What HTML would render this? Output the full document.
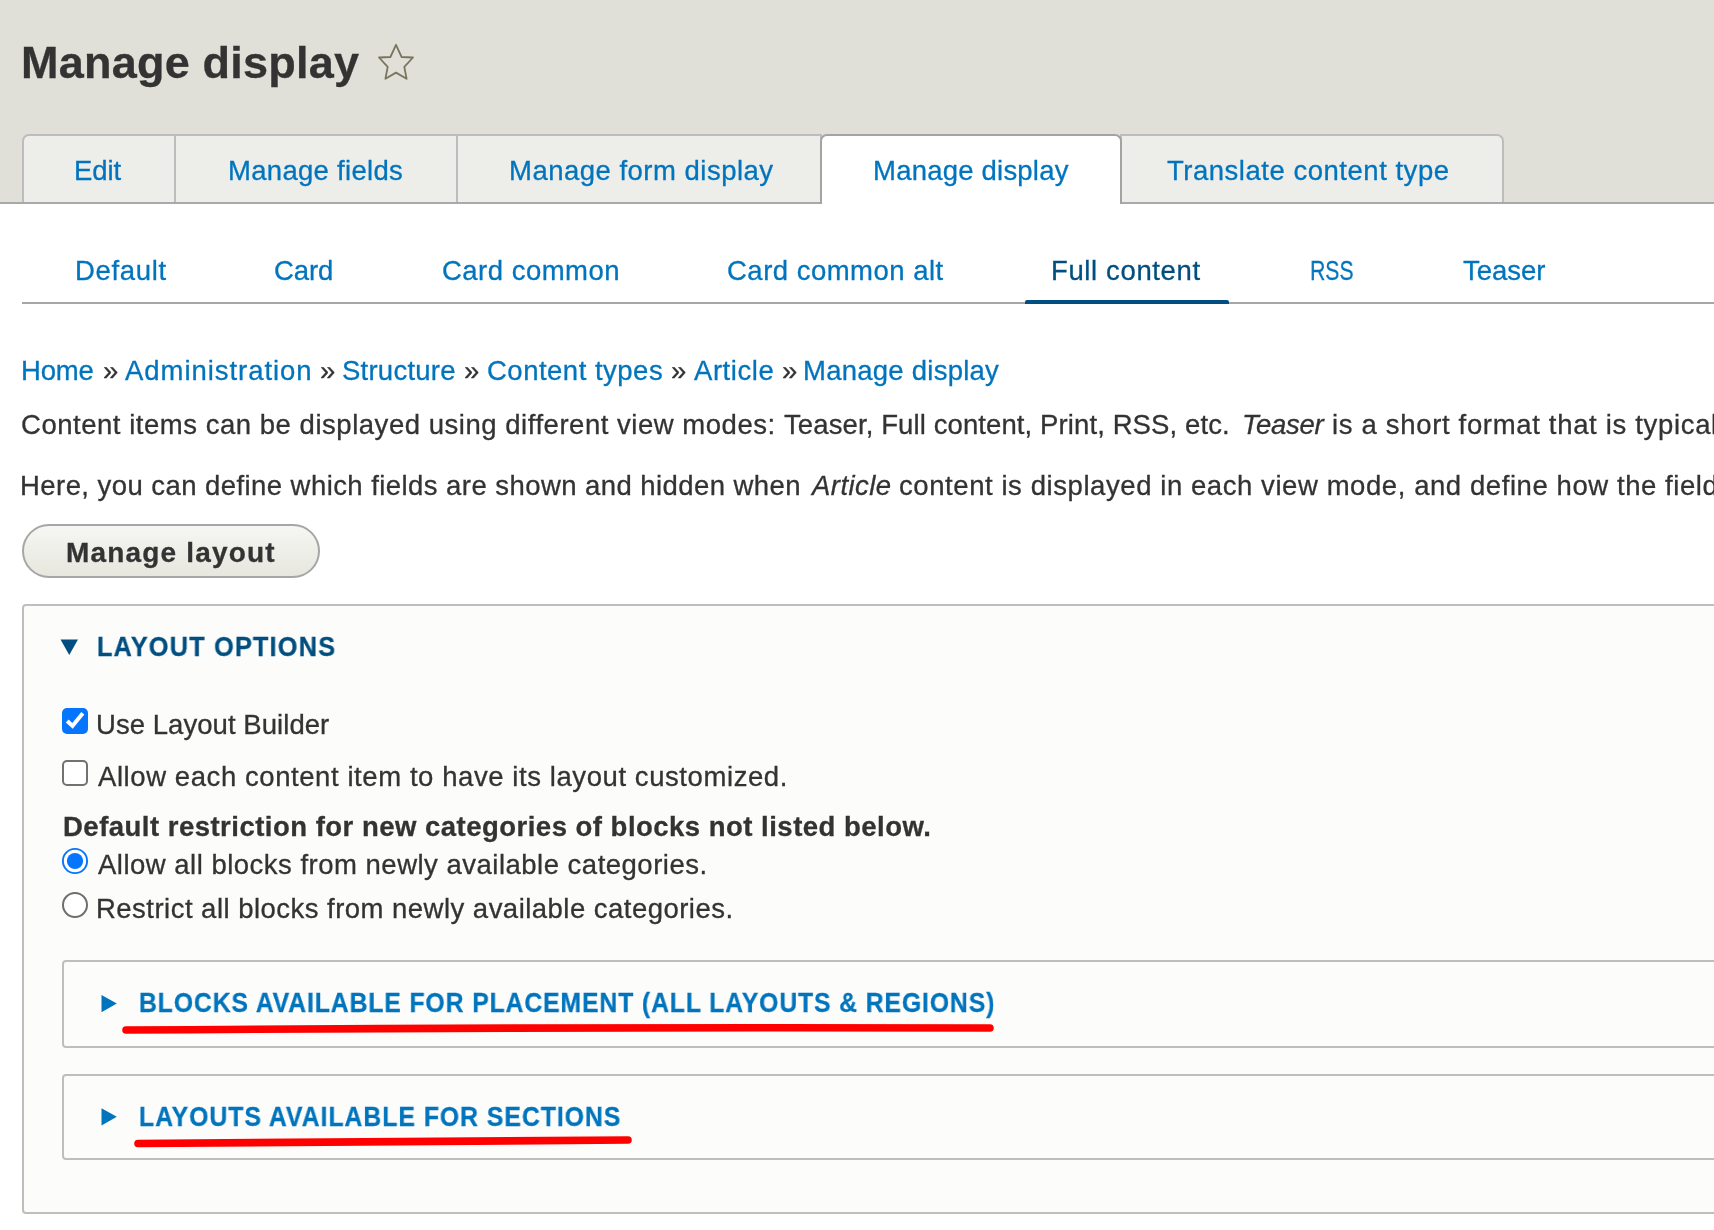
<!DOCTYPE html>
<html><head><meta charset="utf-8">
<style>
html,body{margin:0;padding:0;}
body{width:1714px;height:1230px;overflow:hidden;position:relative;background:#fff;font-family:"Liberation Sans",sans-serif;}
.t{position:absolute;white-space:nowrap;line-height:1.117;transform-origin:0 0;will-change:transform;-webkit-text-stroke:0.3px currentColor;}
.abs{position:absolute;box-sizing:border-box;}
#hdr{left:0;top:0;width:1714px;height:203px;background:#e0e0d8;}
.ptab{top:134px;height:70px;background:#ededea;border:2px solid #bcbcbc;border-bottom:none;}
#ptabline{left:0;top:202px;width:1714px;height:2px;background:#a9a9a9;}
#stabline{left:22px;top:302px;width:1700px;height:2px;background:#a6a6a6;}
#stabact{left:1025px;top:300px;width:204px;height:4px;background:#004f80;border-radius:2px 2px 0 0;}
#btn{left:22px;top:524px;width:298px;height:54px;border:2px solid #a6a6a6;border-radius:27px;background:linear-gradient(#f6f6f3,#e7e7df);}
#det{left:22px;top:604px;width:1760px;height:610px;border:2px solid #bebebe;border-radius:4px;background:#fcfcfa;}
.ndet{left:62px;width:1720px;border:2px solid #bebebe;border-radius:4px;background:#fcfcfa;}
.cb{width:26px;height:26px;border-radius:5px;}
</style></head><body>
<div id="hdr" class="abs"></div>
<svg class="abs" style="left:0;top:0" width="1714" height="1230" viewBox="0 0 1714 1230">
</svg>
<div class="abs ptab" style="left:22px;width:154px;border-top-left-radius:7px;"></div>
<div class="abs ptab" style="left:174px;width:284px;"></div>
<div class="abs ptab" style="left:456px;width:366px;"></div>
<div class="abs ptab" style="left:1120px;width:384px;border-top-right-radius:7px;"></div>
<div id="ptabline" class="abs"></div>
<div class="abs ptab" style="left:820px;width:302px;height:70px;background:#fff;border-color:#a3a3a3;border-radius:7px 7px 0 0;"></div>
<div id="stabline" class="abs"></div>
<div id="stabact" class="abs"></div>
<div id="btn" class="abs"></div>
<div id="det" class="abs"></div>
<div class="abs ndet" style="top:960px;height:88px;"></div>
<div class="abs ndet" style="top:1074px;height:86px;"></div>
<!-- star -->
<svg class="abs" style="left:370px;top:36px" width="52" height="52" viewBox="370 36 52 52">
<polygon points="396,44.8 401.6,57 413,57.5 404.3,66.8 406.6,78.8 396,72.6 385.4,78.8 387.7,66.8 379,57.5 390.4,57" fill="none" stroke="#79755f" stroke-width="1.8" stroke-linejoin="round"/>
</svg>
<!-- layout options triangle -->
<svg class="abs" style="left:0;top:0" width="1714" height="1230">
<polygon points="60.5,639.5 78,639.5 69.25,655" fill="#004f80"/>
<polygon points="101.5,995 116.8,1003.6 101.5,1012.2" fill="#0074bd"/>
<polygon points="101.5,1108.2 116.8,1116.8 101.5,1125.4" fill="#0074bd"/>
<path d="M126,1030 Q560,1027 990,1028" stroke="#ff0000" stroke-width="7.6" stroke-linecap="round" fill="none"/>
<path d="M138,1143.5 Q380,1141 628,1140" stroke="#ff0000" stroke-width="7.6" stroke-linecap="round" fill="none"/>
</svg>
<!-- checkboxes -->
<div class="abs cb" style="left:62px;top:708px;background:#0675fd;"></div>
<svg class="abs" style="left:62px;top:708px" width="26" height="26" viewBox="0 0 26 26"><path d="M5.2,13 L10.5,17.9 L20.8,5.3" stroke="#fff" stroke-width="4" fill="none" stroke-linecap="butt" stroke-linejoin="miter"/></svg>
<div class="abs cb" style="left:62px;top:760px;background:#fff;border:2px solid #727272;"></div>
<svg class="abs" style="left:60px;top:846px" width="30" height="74" viewBox="0 0 30 74">
<circle cx="15" cy="15" r="12.1" fill="#fff" stroke="#0675fd" stroke-width="1.9"/>
<circle cx="15" cy="15" r="8.1" fill="#0675fd"/>
<circle cx="15" cy="59" r="12" fill="#fff" stroke="#6e6e6e" stroke-width="2"/>
</svg>
<div class="t" style="left:21.40px;top:38.38px;font-size:45px;font-weight:bold;font-style:normal;color:#333333;letter-spacing:0.225px">Manage display</div>
<div class="t" style="left:74.40px;top:156.01px;font-size:27.5px;font-weight:normal;font-style:normal;color:#0074bd;letter-spacing:-0.049px">Edit</div>
<div class="t" style="left:228.00px;top:156.01px;font-size:27.5px;font-weight:normal;font-style:normal;color:#0074bd;letter-spacing:0.294px">Manage fields</div>
<div class="t" style="left:508.70px;top:156.01px;font-size:27.5px;font-weight:normal;font-style:normal;color:#0074bd;letter-spacing:0.488px">Manage form display</div>
<div class="t" style="left:872.70px;top:156.01px;font-size:27.5px;font-weight:normal;font-style:normal;color:#0074bd;letter-spacing:0.218px">Manage display</div>
<div class="t" style="left:1166.70px;top:156.01px;font-size:27.5px;font-weight:normal;font-style:normal;color:#0074bd;letter-spacing:0.520px">Translate content type</div>
<div class="t" style="left:74.50px;top:255.71px;font-size:27.5px;font-weight:normal;font-style:normal;color:#0074bd;letter-spacing:0.651px">Default</div>
<div class="t" style="left:274.00px;top:255.71px;font-size:27.5px;font-weight:normal;font-style:normal;color:#0074bd;letter-spacing:-0.104px">Card</div>
<div class="t" style="left:441.70px;top:255.71px;font-size:27.5px;font-weight:normal;font-style:normal;color:#0074bd;letter-spacing:0.480px">Card common</div>
<div class="t" style="left:727.00px;top:255.71px;font-size:27.5px;font-weight:normal;font-style:normal;color:#0074bd;letter-spacing:0.490px">Card common alt</div>
<div class="t" style="left:1051.20px;top:255.71px;font-size:27.5px;font-weight:normal;font-style:normal;color:#004f80;letter-spacing:0.626px">Full content</div>
<div class="t" style="left:1309.84px;top:255.71px;font-size:27.5px;font-weight:normal;font-style:normal;color:#0074bd;letter-spacing:0.000px;transform:scaleX(0.770)">RSS</div>
<div class="t" style="left:1462.70px;top:255.71px;font-size:27.5px;font-weight:normal;font-style:normal;color:#0074bd;letter-spacing:-0.017px">Teaser</div>
<div class="t" style="left:20.75px;top:355.81px;font-size:27.5px;font-weight:normal;font-style:normal;color:#0074bd;letter-spacing:-0.171px">Home</div>
<div class="t" style="left:102.60px;top:355.81px;font-size:27.5px;font-weight:normal;font-style:normal;color:#333333;letter-spacing:0.000px">»</div>
<div class="t" style="left:125.40px;top:355.81px;font-size:27.5px;font-weight:normal;font-style:normal;color:#0074bd;letter-spacing:0.950px">Administration</div>
<div class="t" style="left:319.90px;top:355.81px;font-size:27.5px;font-weight:normal;font-style:normal;color:#333333;letter-spacing:0.000px">»</div>
<div class="t" style="left:341.80px;top:355.81px;font-size:27.5px;font-weight:normal;font-style:normal;color:#0074bd;letter-spacing:0.240px">Structure</div>
<div class="t" style="left:464.30px;top:355.81px;font-size:27.5px;font-weight:normal;font-style:normal;color:#333333;letter-spacing:0.000px">»</div>
<div class="t" style="left:486.90px;top:355.81px;font-size:27.5px;font-weight:normal;font-style:normal;color:#0074bd;letter-spacing:0.497px">Content types</div>
<div class="t" style="left:670.60px;top:355.81px;font-size:27.5px;font-weight:normal;font-style:normal;color:#333333;letter-spacing:0.000px">»</div>
<div class="t" style="left:693.60px;top:355.81px;font-size:27.5px;font-weight:normal;font-style:normal;color:#0074bd;letter-spacing:0.548px">Article</div>
<div class="t" style="left:781.50px;top:355.81px;font-size:27.5px;font-weight:normal;font-style:normal;color:#333333;letter-spacing:0.000px">»</div>
<div class="t" style="left:803.10px;top:355.81px;font-size:27.5px;font-weight:normal;font-style:normal;color:#0074bd;letter-spacing:0.248px">Manage display</div>
<div class="t" style="left:21.00px;top:410.31px;font-size:27.5px;font-weight:normal;font-style:normal;color:#333333;letter-spacing:0.528px">Content items can be displayed using different view modes:</div>
<div class="t" style="left:784.00px;top:410.31px;font-size:27.5px;font-weight:normal;font-style:normal;color:#333333;letter-spacing:0.106px">Teaser, Full content, Print, RSS, etc.</div>
<div class="t" style="left:1241.60px;top:410.31px;font-size:27.5px;font-weight:normal;font-style:italic;color:#333333;letter-spacing:-0.301px">Teaser</div>
<div class="t" style="left:1331.90px;top:410.31px;font-size:27.5px;font-weight:normal;font-style:normal;color:#333333;letter-spacing:0.671px">is a short format that is typical</div>
<div class="t" style="left:20.00px;top:470.51px;font-size:27.5px;font-weight:normal;font-style:normal;color:#333333;letter-spacing:0.438px">Here, you can define which fields are shown and hidden when</div>
<div class="t" style="left:812.20px;top:470.51px;font-size:27.5px;font-weight:normal;font-style:italic;color:#333333;letter-spacing:0.448px">Article</div>
<div class="t" style="left:899.00px;top:470.51px;font-size:27.5px;font-weight:normal;font-style:normal;color:#333333;letter-spacing:0.573px">content is displayed in each view mode, and define how the field</div>
<div class="t" style="left:65.80px;top:536.76px;font-size:28px;font-weight:bold;font-style:normal;color:#333333;letter-spacing:1.170px">Manage layout</div>
<div class="t" style="left:97.28px;top:631.91px;font-size:27.5px;font-weight:bold;font-style:normal;color:#004f80;letter-spacing:1.293px;transform:scaleX(0.920)">LAYOUT OPTIONS</div>
<div class="t" style="left:95.60px;top:709.91px;font-size:27.5px;font-weight:normal;font-style:normal;color:#333333;letter-spacing:0.053px">Use Layout Builder</div>
<div class="t" style="left:97.60px;top:762.01px;font-size:27.5px;font-weight:normal;font-style:normal;color:#333333;letter-spacing:0.576px">Allow each content item to have its layout customized.</div>
<div class="t" style="left:62.70px;top:812.21px;font-size:27.5px;font-weight:bold;font-style:normal;color:#333333;letter-spacing:0.486px">Default restriction for new categories of blocks not listed below.</div>
<div class="t" style="left:97.60px;top:850.41px;font-size:27.5px;font-weight:normal;font-style:normal;color:#333333;letter-spacing:0.493px">Allow all blocks from newly available categories.</div>
<div class="t" style="left:95.60px;top:894.01px;font-size:27.5px;font-weight:normal;font-style:normal;color:#333333;letter-spacing:0.474px">Restrict all blocks from newly available categories.</div>
<div class="t" style="left:138.90px;top:987.81px;font-size:27.5px;font-weight:bold;font-style:normal;color:#0074bd;letter-spacing:0.992px;transform:scaleX(0.900)">BLOCKS AVAILABLE FOR PLACEMENT (ALL LAYOUTS &amp; REGIONS)</div>
<div class="t" style="left:138.90px;top:1101.61px;font-size:27.5px;font-weight:bold;font-style:normal;color:#0074bd;letter-spacing:1.111px;transform:scaleX(0.900)">LAYOUTS AVAILABLE FOR SECTIONS</div>
</body></html>
